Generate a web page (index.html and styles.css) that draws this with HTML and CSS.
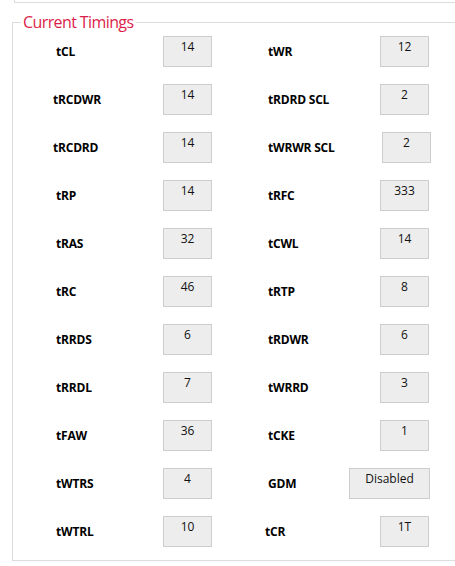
FILE: index.html
```html
<!DOCTYPE html>
<html>
<head>
<meta charset="utf-8">
<link rel="stylesheet" href="styles.css">
</head>
<body>
<div class="prev-box"></div>
<fieldset class="group">
  <legend class="group-title">Current Timings</legend>
  <div class="grid">
    <div class="lbl">tCL</div><div class="val">14</div><div></div><div class="lbl">tWR</div><div class="val">12</div>
    <div class="lbl lbl-in">tRCDWR</div><div class="val">14</div><div></div><div class="lbl">tRDRD SCL</div><div class="val">2</div>
    <div class="lbl lbl-in">tRCDRD</div><div class="val">14</div><div></div><div class="lbl">tWRWR SCL</div><div class="val val-shift">2</div>
    <div class="lbl">tRP</div><div class="val">14</div><div></div><div class="lbl">tRFC</div><div class="val">333</div>
    <div class="lbl">tRAS</div><div class="val">32</div><div></div><div class="lbl">tCWL</div><div class="val">14</div>
    <div class="lbl">tRC</div><div class="val">46</div><div></div><div class="lbl">tRTP</div><div class="val">8</div>
    <div class="lbl">tRRDS</div><div class="val">6</div><div></div><div class="lbl">tRDWR</div><div class="val">6</div>
    <div class="lbl">tRRDL</div><div class="val">7</div><div></div><div class="lbl">tWRRD</div><div class="val">3</div>
    <div class="lbl">tFAW</div><div class="val">36</div><div></div><div class="lbl">tCKE</div><div class="val">1</div>
    <div class="lbl">tWTRS</div><div class="val">4</div><div></div><div class="lbl">GDM</div><div class="val val-wide">Disabled</div>
    <div class="lbl">tWTRL</div><div class="val">10</div><div></div><div class="lbl lbl-in">tCR</div><div class="val">1T</div>
  </div>
</fieldset>
</body>
</html>
```
FILE: styles.css
```css
html, body {
  margin: 0;
  padding: 0;
  background: #ffffff;
  overflow: hidden;
  font-family: "Open Sans", "Noto Sans", sans-serif;
}
.prev-box {
  margin-left: 14px;
  height: 2px;
  border-left: 1px solid #dcdcdc;
  border-bottom: 1px solid #dcdcdc;
}
.group {
  margin: 8px 0 0 12px;
  width: 443px;
  padding: 0 0 0 43px;
  border: 1px solid #dcdcdc;
  border-right: none;
  box-sizing: border-box;
  height: 550px;
}
.group-title {
  margin-left: -35px;
  padding: 0 3px 0 2px;
  color: #dc1e4a;
  font-size: 16px;
  line-height: 22px;
  letter-spacing: -0.6px;
}
.grid {
  display: grid;
  grid-template-columns: 107px 49px 56px 112px 49px;
  grid-auto-rows: 31px;
  row-gap: 17px;
  margin-top: 3px;
}
.lbl {
  align-self: center;
  font-weight: 700;
  font-size: 12px;
  line-height: 16px;
  color: #000;
  padding-top: 1px;
  letter-spacing: -0.2px;
}
.lbl-in {
  margin-left: -3px;
}
.val {
  box-sizing: border-box;
  height: 31px;
  width: 49px;
  background: #ededed;
  border: 1px solid #cdcdcd;
  text-align: center;
  font-size: 12px;
  line-height: 16px;
  padding-top: 2px;
  color: #111;
}
.val-shift {
  margin-left: 2px;
}
.val-wide {
  width: 81px;
  justify-self: end;
  margin-right: -1px;
}
```
